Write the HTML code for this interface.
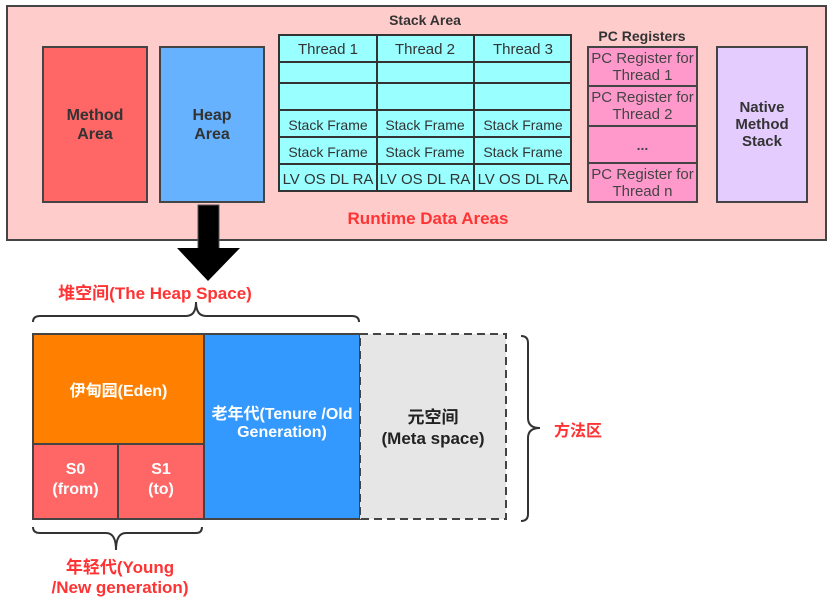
<!DOCTYPE html>
<html><head><meta charset="utf-8"><style>
body{margin:0;width:831px;height:600px;background:#fff;position:relative;overflow:hidden;font-family:"Liberation Sans","Noto Sans CJK SC",sans-serif}
.a{position:absolute;box-sizing:border-box}
.c{display:flex;align-items:center;justify-content:center;text-align:center}
.b{font-weight:bold}
</style></head><body>
<div class="a" style="left:6px;top:5px;width:821px;height:236px;background:#ffcccc;border:2px solid #444"></div>
<div class="a c b" style="left:42px;top:46px;width:106px;height:157px;background:#ff6666;border:2px solid #444;color:#333;font-size:16px;line-height:19px">Method<br>Area</div>
<div class="a c b" style="left:159px;top:46px;width:106px;height:157px;background:#66b2ff;border:2px solid #444;color:#333;font-size:16px;line-height:19px">Heap<br>Area</div>
<div class="a c b" style="left:279px;top:10px;width:292px;height:20px;font-size:14px;color:#333">Stack Area</div>
<svg class="a" style="left:278px;top:34px" width="296" height="160">
<rect x="1" y="1" width="292" height="156" fill="#99ffff" stroke="#333" stroke-width="2"/>
<g stroke="#333" stroke-width="2"><line x1="99" y1="1" x2="99" y2="157"/><line x1="196" y1="1" x2="196" y2="157"/>
<line x1="1" y1="28" x2="293" y2="28"/><line x1="1" y1="49" x2="293" y2="49"/><line x1="1" y1="76" x2="293" y2="76"/><line x1="1" y1="103" x2="293" y2="103"/><line x1="1" y1="130" x2="293" y2="130"/></g>
<g font-family="Liberation Sans,sans-serif" fill="#333" text-anchor="middle">
<text x="50" y="20" font-size="15">Thread 1</text><text x="147" y="20" font-size="15">Thread 2</text><text x="245" y="20" font-size="15">Thread 3</text>
<text x="50" y="96" font-size="14">Stack Frame</text><text x="147" y="96" font-size="14">Stack Frame</text><text x="245" y="96" font-size="14">Stack Frame</text>
<text x="50" y="123" font-size="14">Stack Frame</text><text x="147" y="123" font-size="14">Stack Frame</text><text x="245" y="123" font-size="14">Stack Frame</text>
<text x="50" y="150" font-size="15">LV OS DL RA</text><text x="147" y="150" font-size="15">LV OS DL RA</text><text x="245" y="150" font-size="15">LV OS DL RA</text>
</g></svg>
<div class="a c b" style="left:587px;top:27px;width:110px;height:18px;font-size:14px;color:#333">PC Registers</div>
<div class="a" style="left:587px;top:46px;width:111px;height:157px;background:#ff99cc;border:2px solid #444"></div>
<div class="a" style="left:587px;top:85px;width:111px;height:2px;background:#444"></div>
<div class="a" style="left:587px;top:125px;width:111px;height:2px;background:#444"></div>
<div class="a" style="left:587px;top:162px;width:111px;height:2px;background:#444"></div>
<div class="a c" style="left:587px;top:48px;width:111px;height:37px;font-size:15px;line-height:17px;color:#444">PC Register for<br>Thread 1</div>
<div class="a c" style="left:587px;top:87px;width:111px;height:38px;font-size:15px;line-height:17px;color:#444">PC Register for<br>Thread 2</div>
<div class="a c b" style="left:587px;top:127px;width:111px;height:35px;font-size:14px;color:#444">...</div>
<div class="a c" style="left:587px;top:164px;width:111px;height:37px;font-size:15px;line-height:17px;color:#444">PC Register for<br>Thread n</div>
<div class="a c b" style="left:716px;top:46px;width:92px;height:157px;background:#e5ccff;border:2px solid #444;color:#333;font-size:15px;line-height:17px">Native<br>Method<br>Stack</div>
<div class="a c b" style="left:300px;top:208px;width:256px;height:22px;font-size:17px;color:#ff3333">Runtime Data Areas</div>
<svg class="a" style="left:0;top:0" width="831" height="600">
<rect x="198" y="205" width="21" height="45" fill="#000" stroke="#555"/>
<polygon points="177,248 240,248 208,281" fill="#000"/>
<path d="M33,322 Q33,316 40,316 L186,316 Q196,316 196,302 Q196,316 206,316 L352,316 Q359,316 359,322" fill="none" stroke="#333" stroke-width="2"/>
<path d="M33,527 Q33,533 40,533 L106,533 Q116,533 116,550 Q116,533 126,533 L196,533 Q202,533 202,527" fill="none" stroke="#333" stroke-width="2"/>
<path d="M521,336 Q528,336 528,343 L528,418 Q528,428 540,428 Q528,428 528,438 L528,514 Q528,521 521,521" fill="none" stroke="#333" stroke-width="2"/>
<rect x="33" y="334" width="171" height="110" fill="#ff8000" stroke="#444" stroke-width="2"/>
<rect x="33" y="444" width="85" height="75" fill="#ff6666" stroke="#444" stroke-width="2"/>
<rect x="118" y="444" width="86" height="75" fill="#ff6666" stroke="#444" stroke-width="2"/>
<rect x="204" y="334" width="156" height="185" fill="#3399ff" stroke="#444" stroke-width="2"/>
<rect x="360" y="334" width="146" height="185" fill="#e6e6e6" stroke="#444" stroke-width="2" stroke-dasharray="8,5"/>
</svg>
<div class="a c b" style="left:20px;top:280px;width:270px;height:22px;font-size:17px;color:#ff3333">堆空间(The Heap Space)</div>
<div class="a c b" style="left:33px;top:378px;width:171px;height:22px;font-size:16px;color:#fff">伊甸园(Eden)</div>
<div class="a c b" style="left:33px;top:459px;width:85px;height:42px;font-size:16px;line-height:20px;color:#fff">S0<br>(from)</div>
<div class="a c b" style="left:118px;top:459px;width:86px;height:42px;font-size:16px;line-height:20px;color:#fff">S1<br>(to)</div>
<div class="a c b" style="left:200px;top:404px;width:164px;height:40px;font-size:16px;line-height:18px;color:#fff">老年代(Tenure /Old<br>Generation)</div>
<div class="a c b" style="left:360px;top:406px;width:146px;height:44px;font-size:17px;line-height:21px;color:#222">元空间<br>(Meta space)</div>
<div class="a c b" style="left:545px;top:418px;width:66px;height:22px;font-size:16px;color:#ff3333">方法区</div>
<div class="a c b" style="left:20px;top:557px;width:200px;height:42px;font-size:17px;line-height:20px;color:#ff3333">年轻代(Young<br>/New generation)</div>
</body></html>
